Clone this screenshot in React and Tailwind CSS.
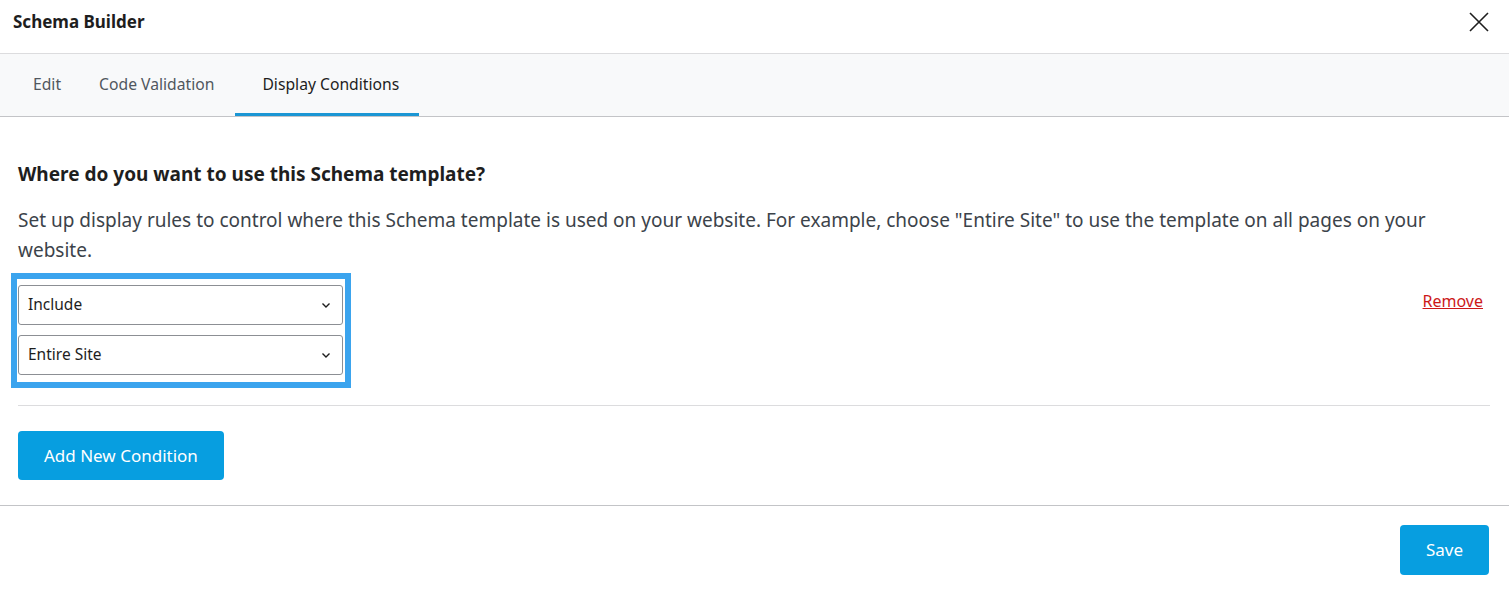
import { useState } from 'react';

const font = { fontFamily: '"Noto Sans", "Open Sans", sans-serif' };

function Select({ value, options }) {
  return (
    <div className="relative">
      <select
        defaultValue={value}
        className="w-full h-10 appearance-none rounded-[3px] border border-[#8c8f94] bg-white pl-[9px] pr-8 text-[15.5px] text-[#1e1e1e] outline-none"
      >
        {options.map((o) => (
          <option key={o}>{o}</option>
        ))}
      </select>
      <svg
        className="pointer-events-none absolute right-[12px] top-[17px]"
        width="10"
        height="7"
        viewBox="0 0 10 7"
        fill="none"
      >
        <path d="M1.5 1.5 5 5l3.5-3.5" stroke="#1e1e1e" strokeWidth="1.4" />
      </svg>
    </div>
  );
}

export default function App() {
  const [tab, setTab] = useState('display');

  const tabs = [
    { id: 'edit', label: 'Edit' },
    { id: 'code', label: 'Code Validation' },
    { id: 'display', label: 'Display Conditions' },
  ];

  return (
    <div className="w-[1509px] h-[595px] bg-white flex flex-col" style={font}>
      {/* header */}
      <div className="h-[54px] flex items-center justify-between pl-[13px] pr-[20px] pb-[9px] border-b border-[#dcdcde]">
        <h1 className="text-[17px] font-bold text-[#1e1e1e]">Schema Builder</h1>
        <button className="p-0">
          <svg width="20" height="20" viewBox="0 0 20 20" fill="none">
            <path d="M1 1l18 18M19 1 1 19" stroke="#1e1e1e" strokeWidth="1.6" />
          </svg>
        </button>
      </div>

      {/* tabs */}
      <div className="h-[63px] bg-[#f8f9fa] border-b border-[#c3c4c7] flex pl-[14px]">
        {tabs.map((t) => (
          <button
            key={t.id}
            onClick={() => setTab(t.id)}
            className={
              t.id === tab
                ? 'ml-[2px] pl-[27px] pr-[20px] h-full flex items-center text-[15.7px] text-[#1e1e1e] border-b-[3px] border-[#1a96d4] pt-[2px] -mb-px'
                : 'px-[19px] h-full flex items-center text-[15.7px] text-[#50575e]'
            }
          >
            {t.label}
          </button>
        ))}
      </div>

      {/* body */}
      <div className="px-[18px] pt-[42px]">
        <h2 className="text-[19px] font-bold text-[#1e1e1e] leading-[30px]">
          Where do you want to use this Schema template?
        </h2>
        <p className="mt-[16px] text-[19px] leading-[30px] text-[#3c434a] pr-[40px]">
          Set up display rules to control where this Schema template is used on your website. For example, choose "Entire Site" to use the template on all pages on your website.
        </p>

        <div className="mt-[8px] flex items-start justify-between">
          <div className="-ml-[7px] w-[340px] border-[6px] border-[#3ba4ee] pl-[1px] pr-[2px] pt-[6px] pb-[7px] flex flex-col gap-[10px]">
            <Select value="Include" options={['Include', 'Exclude']} />
            <Select value="Entire Site" options={['Entire Site', 'Front Page', 'All Posts']} />
          </div>
          <a href="#" className="mt-[16px] mr-[8px] text-[16px] text-[#cc1818] underline">
            Remove
          </a>
        </div>

        <div className="mt-[17px] border-t border-[#dcdcde] mr-[1px]" />

        <button className="mt-[25px] h-[49px] px-[26px] rounded-[4px] bg-[#079ee0] text-white text-[17px]">
          Add New Condition
        </button>
      </div>

      {/* footer */}
      <div className="mt-[25px] border-t border-[#c3c4c7] flex justify-end px-[20px] pt-[19px]">
        <button className="h-[50px] w-[89px] rounded-[4px] bg-[#079ee0] text-white text-[17px]">
          Save
        </button>
      </div>
    </div>
  );
}
